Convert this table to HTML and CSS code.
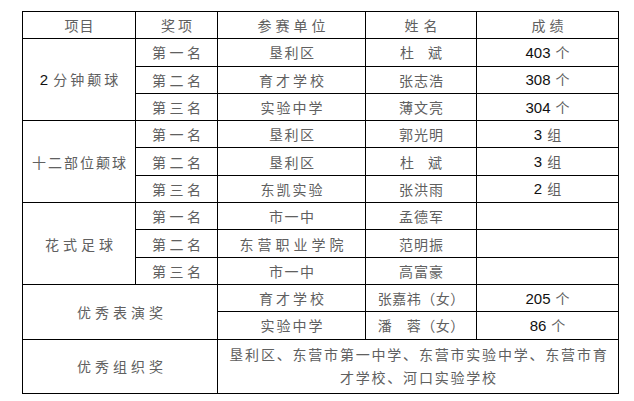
FILE: index.html
```html
<!DOCTYPE html>
<html lang="zh">
<head>
<meta charset="utf-8">
<link rel="stylesheet" href="styles.css">
</head>
<body>
<table class="results">
  <colgroup>
    <col class="c1"><col class="c2"><col class="c3"><col class="c4"><col class="c5">
  </colgroup>
  <tr>
    <td class="ls1">项目</td>
    <td class="ls3">奖项</td>
    <td class="ls4">参赛单位</td>
    <td class="ls5">姓名</td>
    <td class="ls4">成绩</td>
  </tr>
  <tr>
    <td rowspan="3" class="ls3"><span class="num">2</span>分钟颠球</td>
    <td class="ls35">第一名</td>
    <td class="ls15">垦利区</td>
    <td class="ls0">杜　斌</td>
    <td><span class="num">403</span>个</td>
  </tr>
  <tr>
    <td class="ls35">第二名</td>
    <td class="ls3">育才学校</td>
    <td class="ls1">张志浩</td>
    <td><span class="num">308</span>个</td>
  </tr>
  <tr>
    <td class="ls35">第三名</td>
    <td class="ls2">实验中学</td>
    <td class="ls1">薄文亮</td>
    <td><span class="num">304</span>个</td>
  </tr>
  <tr>
    <td rowspan="3" class="ls2">十二部位颠球</td>
    <td class="ls35">第一名</td>
    <td class="ls15">垦利区</td>
    <td class="ls1">郭光明</td>
    <td><span class="num">3</span>组</td>
  </tr>
  <tr>
    <td class="ls35">第二名</td>
    <td class="ls15">垦利区</td>
    <td class="ls0">杜　斌</td>
    <td><span class="num">3</span>组</td>
  </tr>
  <tr>
    <td class="ls35">第三名</td>
    <td class="ls2">东凯实验</td>
    <td class="ls1">张洪雨</td>
    <td><span class="num">2</span>组</td>
  </tr>
  <tr>
    <td rowspan="3" class="ls4">花式足球</td>
    <td class="ls35">第一名</td>
    <td class="ls15">市一中</td>
    <td class="ls1">孟德军</td>
    <td></td>
  </tr>
  <tr>
    <td class="ls35">第二名</td>
    <td class="ls4">东营职业学院</td>
    <td class="ls1">范明振</td>
    <td></td>
  </tr>
  <tr>
    <td class="ls35">第三名</td>
    <td class="ls15">市一中</td>
    <td class="ls1">高富豪</td>
    <td></td>
  </tr>
  <tr>
    <td rowspan="2" colspan="2" class="ls4">优秀表演奖</td>
    <td class="ls3">育才学校</td>
    <td class="ls05">张嘉祎（女）</td>
    <td><span class="num">205</span>个</td>
  </tr>
  <tr>
    <td class="ls2">实验中学</td>
    <td class="ls05">潘　蓉（女）</td>
    <td><span class="num">86</span>个</td>
  </tr>
  <tr class="tall">
    <td colspan="2" class="ls4">优秀组织奖</td>
    <td colspan="3" class="wrap">垦利区、东营市第一中学、东营市实验中学、东营市育才学校、河口实验学校</td>
  </tr>
</table>
</body>
</html>
```

FILE: styles.css
```css
html, body {
  margin: 0;
  padding: 0;
  background: #ffffff;
}

body {
  padding: 11px 0 0 22px;
}

.results {
  border-collapse: collapse;
  table-layout: fixed;
  width: 596px;
  font-family: "Noto Sans CJK SC", "Noto Sans", sans-serif;
  font-size: 14px;
  color: #606060;
}

.c1 { width: 113px; }
.c2 { width: 82px; }
.c3 { width: 148px; }
.c4 { width: 111px; }
.c5 { width: 142px; }

.results tr {
  height: 27.3px;
}

.results tr.tall {
  height: 54px;
}

.results td {
  border: 1px solid #000;
  padding: 0;
  text-align: center;
  vertical-align: middle;
  line-height: 18px;
  white-space: nowrap;
}

.num {
  font-family: "Liberation Sans", Arial, sans-serif;
  font-size: 15px;
  letter-spacing: 0;
  margin-right: 5px;
  color: #111;
}

.ls0 { letter-spacing: 0; }
.ls05 { letter-spacing: 0.5px; padding-left: 0.5px !important; }
.ls1 { letter-spacing: 1px; padding-left: 1px !important; }
.ls15 { letter-spacing: 1.5px; padding-left: 1.5px !important; }
.ls2 { letter-spacing: 2px; padding-left: 2px !important; }
.ls3 { letter-spacing: 3px; padding-left: 3px !important; }
.ls35 { letter-spacing: 3.5px; padding-left: 3.5px !important; }
.ls4 { letter-spacing: 4px; padding-left: 4px !important; }
.ls5 { letter-spacing: 5px; padding-left: 5px !important; }

.results td.wrap {
  white-space: normal;
  letter-spacing: 1.8px;
  line-height: 23px;
  padding: 0 8px 0 9.8px;
}
```
